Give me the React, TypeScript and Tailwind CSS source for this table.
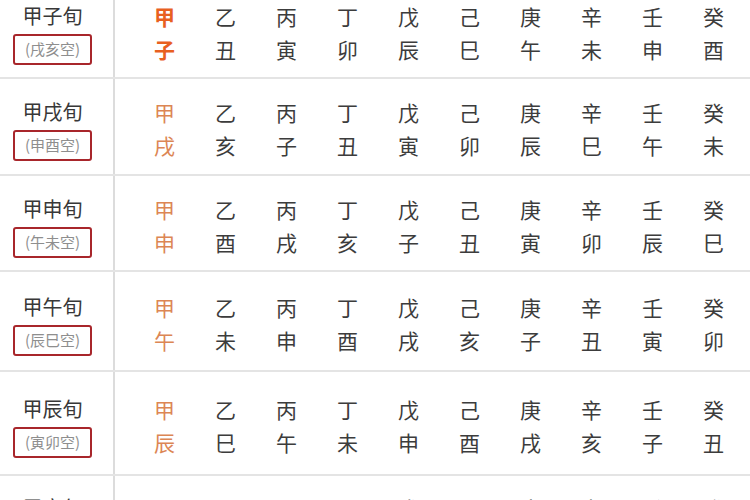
const stems = ["甲", "乙", "丙", "丁", "戊", "己", "庚", "辛", "壬", "癸"];

interface Xun {
  name: string;
  empty: string;
  branches: string[];
  height: string;
}

const rows: Xun[] = [
  { name: "甲子旬", empty: "(戌亥空)", branches: ["子", "丑", "寅", "卯", "辰", "巳", "午", "未", "申", "酉"], height: "h-[96px]" },
  { name: "甲戌旬", empty: "(申酉空)", branches: ["戌", "亥", "子", "丑", "寅", "卯", "辰", "巳", "午", "未"], height: "h-[97px]" },
  { name: "甲申旬", empty: "(午未空)", branches: ["申", "酉", "戌", "亥", "子", "丑", "寅", "卯", "辰", "巳"], height: "h-[96px]" },
  { name: "甲午旬", empty: "(辰巳空)", branches: ["午", "未", "申", "酉", "戌", "亥", "子", "丑", "寅", "卯"], height: "h-[100px]" },
  { name: "甲辰旬", empty: "(寅卯空)", branches: ["辰", "巳", "午", "未", "申", "酉", "戌", "亥", "子", "丑"], height: "h-[104px]" },
  { name: "甲寅旬", empty: "(子丑空)", branches: ["寅", "卯", "辰", "巳", "午", "未", "申", "酉", "戌", "亥"], height: "h-[94px]" },
];

function cellColor(i: number, j: number) {
  if (j !== 0) return "text-[#3c3c3c]";
  return i === 0 ? "text-[#e8601f] font-bold" : "text-[#dc8654]";
}

export default function App() {
  return (
    <div
      className="w-[750px] h-[500px] overflow-hidden bg-white"
      style={{ fontFamily: '"Noto Sans CJK SC", "Noto Sans", sans-serif' }}
    >
      <div className="mt-[-17px]">
        {rows.map((r, i) => (
          <div key={r.name} className={`flex ${r.height} border-b-2 border-[#e4e4e4]`}>
            {/* name + empty branches */}
            <div className="w-[115px] shrink-0 border-r-2 border-[#dcdcdc] flex flex-col items-center justify-center pt-[5px] pr-[8px]">
              <div className="h-[30px] leading-[30px] text-[20px] text-[#383838]">{r.name}</div>
              <div className="mt-[3px] h-[31px] w-[79px] rounded-[3px] border-2 border-[#a8262b] flex items-center justify-center text-[15px] text-[#8e8e8e]">
                {r.empty}
              </div>
            </div>
            {/* stems over branches */}
            <div className="flex-1 flex items-center pl-[19px] pt-[5px]">
              <div className="grid grid-cols-[repeat(10,61px)]">
                {stems.map((s, j) => (
                  <div key={"s" + j} className={`h-[33px] leading-[33px] text-center text-[21px] ${cellColor(i, j)}`}>
                    {s}
                  </div>
                ))}
                {r.branches.map((b, j) => (
                  <div key={"b" + j} className={`h-[33px] leading-[33px] text-center text-[21px] ${cellColor(i, j)}`}>
                    {b}
                  </div>
                ))}
              </div>
            </div>
          </div>
        ))}
      </div>
    </div>
  );
}
